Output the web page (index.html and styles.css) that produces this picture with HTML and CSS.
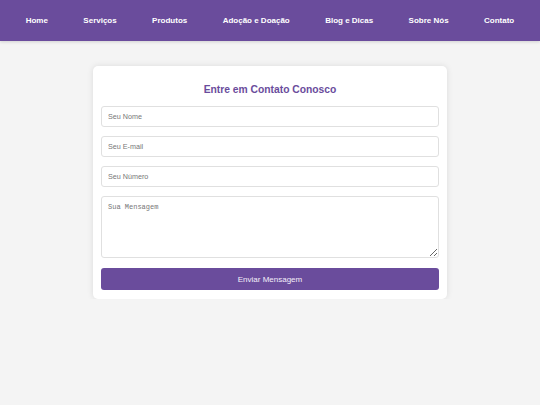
FILE: index.html
```html
<!DOCTYPE html>
<html lang="pt">
<head>
<meta charset="utf-8">
<link rel="stylesheet" href="styles.css">
</head>
<body>
<nav class="nav">
  <a href="#">Home</a>
  <a href="#">Serviços</a>
  <a href="#">Produtos</a>
  <a href="#">Adoção e Doação</a>
  <a href="#">Blog e Dicas</a>
  <a href="#">Sobre Nós</a>
  <a href="#">Contato</a>
</nav>
<main class="main">
  <section class="card">
    <h2 class="title">Entre em Contato Conosco</h2>
    <form class="form">
      <input class="field" type="text" placeholder="Seu Nome">
      <input class="field" type="email" placeholder="Seu E-mail">
      <input class="field" type="tel" placeholder="Seu Número">
      <textarea class="field area" placeholder="Sua Mensagem"></textarea>
      <button class="btn" type="button">Enviar Mensagem</button>
    </form>
  </section>
</main>
</body>
</html>
```
FILE: styles.css
```css
* { box-sizing: border-box; }
body {
  margin: 0;
  background: #f4f4f4;
  font-family: "Liberation Sans", Arial, sans-serif;
}
.nav {
  height: 41px;
  padding: 0 8px;
  background: #6a4c9c;
  display: flex;
  justify-content: space-around;
  align-items: center;
  box-shadow: 0 1px 3px rgba(0,0,0,0.15);
}
.nav a {
  color: #fff;
  text-decoration: none;
  font-weight: bold;
  font-size: 8px;
}
.main {
  display: flex;
  justify-content: center;
  padding-top: 25px;
}
.card {
  width: 354px;
  background: #fff;
  border-radius: 5px;
  box-shadow: 0 0 6px rgba(0,0,0,0.1);
  padding: 16px 8px 9px;
}
.title {
  margin: 0 0 8px;
  text-align: center;
  color: #6a4c9c;
  font-size: 10.3px;
  line-height: 16px;
}
.form {
  display: flex;
  flex-direction: column;
  gap: 9px;
}
.field {
  width: 100%;
  height: 21px;
  border: 1px solid #e0e0e0;
  border-radius: 3px;
  padding: 0 6px;
  font-family: "Liberation Sans", Arial, sans-serif;
  font-size: 7.2px;
  color: #333;
  background: #fff;
}
.field::placeholder { color: #777; }
.area {
  height: 62px;
  padding: 6px;
  font-family: "Liberation Mono", monospace;
  font-size: 7px;
  resize: vertical;
  margin-bottom: 1px;
}
.btn {
  height: 22px;
  border: none;
  border-radius: 3px;
  background: #6a4c9c;
  color: #f4eefa;
  font-family: "Liberation Sans", Arial, sans-serif;
  font-size: 8px;
}
```
